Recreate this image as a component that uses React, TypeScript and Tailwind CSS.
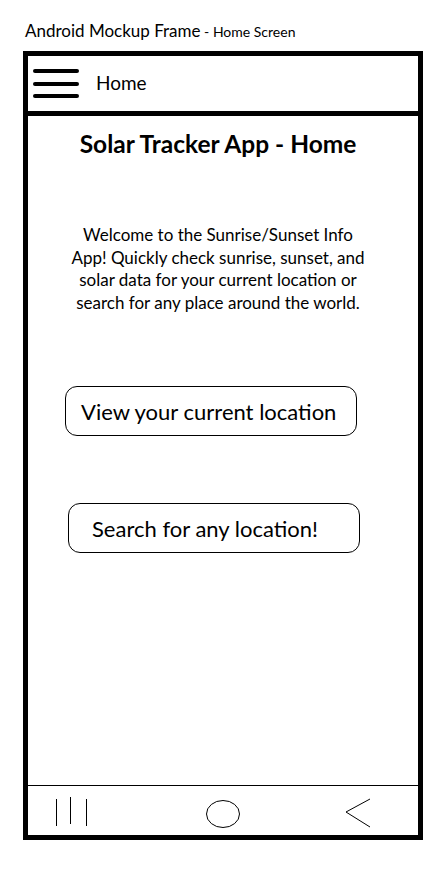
export default function App() {
  const font = { fontFamily: "Lato, 'Open Sans', sans-serif" };
  return (
    <div className="min-h-[869px] w-[443px] bg-white text-black" style={font}>
      <div className="h-[51px] pl-[25px] pt-[21px] leading-[20px]">
        <span className="text-[17px]">Android Mockup Frame</span>
        <span className="text-[14px]"> - Home Screen</span>
      </div>

      <div className="ml-[23px] flex h-[789px] w-[400px] flex-col border-[5px] border-black">
        {/* top app bar */}
        <div className="flex h-[60px] shrink-0 items-center border-b-[5px] border-black">
          <div className="ml-[5px] flex w-[46px] flex-col gap-[8.5px]">
            <span className="block h-[4px] rounded-full bg-black" />
            <span className="block h-[4px] rounded-full bg-black" />
            <span className="block h-[4px] rounded-full bg-black" />
          </div>
          <span className="ml-[17px] text-[19px]">Home</span>
        </div>

        {/* screen content */}
        <div className="flex flex-1 flex-col">
          <h1 className="mt-[13px] pr-[10px] text-center text-[24.5px] font-bold leading-[30px]">
            Solar Tracker App - Home
          </h1>
          <p className="ml-[37px] mt-[65px] w-[306px] text-center text-[17px] leading-[22.5px]">
            Welcome to the Sunrise/Sunset Info App! Quickly check sunrise, sunset, and solar data for your current location or search for any place around the world.
          </p>
          <button
            type="button"
            className="ml-[37px] mt-[72px] h-[50px] w-[292px] rounded-[12px] border border-black pl-[15px] text-left text-[22px]"
          >
            View your current location
          </button>
          <button
            type="button"
            className="ml-[40px] mt-[67px] h-[50px] w-[292px] rounded-[12px] border border-black pl-[23px] text-left text-[22px]"
          >
            Search for any location!
          </button>
        </div>

        {/* system nav bar */}
        <div className="relative h-[50px] shrink-0 border-t border-black">
          <svg width="390" height="49" viewBox="0 0 390 49" className="block">
            <line x1="28.5" y1="13" x2="28.5" y2="40" stroke="black" strokeWidth="1" />
            <line x1="42.5" y1="11" x2="42.5" y2="38" stroke="black" strokeWidth="1" />
            <line x1="58.5" y1="13" x2="58.5" y2="40" stroke="black" strokeWidth="1" />
            <ellipse cx="195" cy="28" rx="16.5" ry="13.5" fill="none" stroke="black" strokeWidth="1" />
            <polyline points="342,13 318,26 342,41" fill="none" stroke="black" strokeWidth="1" />
          </svg>
        </div>
      </div>
    </div>
  );
}
